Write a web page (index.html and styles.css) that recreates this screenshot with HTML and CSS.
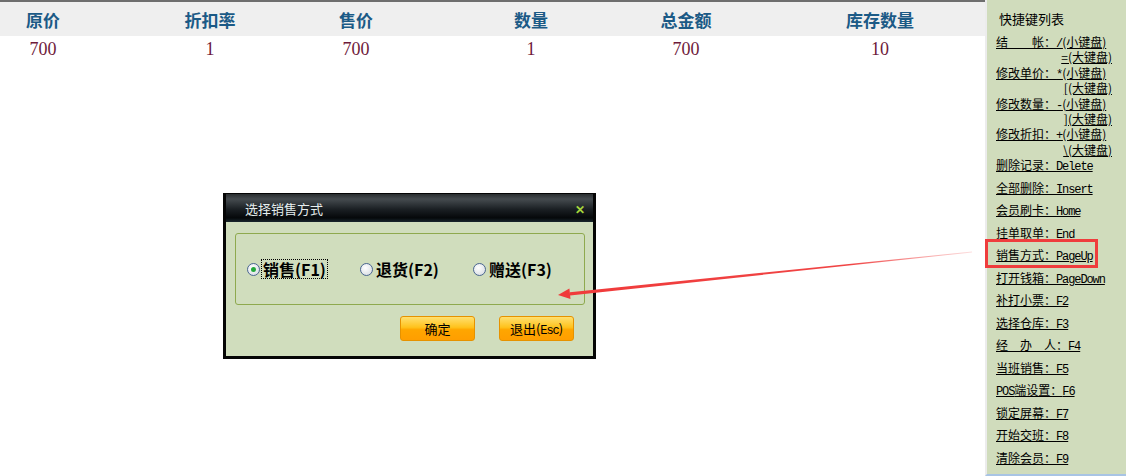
FILE: index.html
```html
<!DOCTYPE html>
<html lang="zh-CN">
<head>
  <meta charset="UTF-8">
  <title>销售方式</title>
  <link rel="stylesheet" href="styles.css">
</head>
<body>
  <div class="screen">
    <main class="sales">
      <div class="cols head">
        <span>原价</span><span>折扣率</span><span>售价</span><span>数量</span><span>总金额</span><span>库存数量</span>
      </div>
      <div class="cols row">
        <span>700</span><span>1</span><span>700</span><span>1</span><span>700</span><span>10</span>
      </div>
    </main>

    <aside class="keys">
      <div class="keys-title">快捷键列表</div>
      <ul class="keys-list">
        <li class="tight"><u>结　　帐：<span class="k">/</span>(小键盘)</u><u class="sub">=(大键盘)</u></li>
        <li class="tight"><u>修改单价：<span class="k">*</span>(小键盘)</u><u class="sub">[(大键盘)</u></li>
        <li class="tight"><u>修改数量：<span class="k">-</span>(小键盘)</u><u class="sub">](大键盘)</u></li>
        <li class="tight"><u>修改折扣：<span class="k">+</span>(小键盘)</u><u class="sub">\(大键盘)</u></li>
        <li class="tight"><u>删除记录：<span class="k">Delete</span></u></li>
        <li class="gap"><u>全部删除：<span class="k">Insert</span></u></li>
        <li><u>会员刷卡：<span class="k">Home</span></u></li>
        <li><u>挂单取单：<span class="k">End</span></u></li>
        <li><u>销售方式：<span class="k">PageUp</span></u></li>
        <li><u>打开钱箱：<span class="k">PageDown</span></u></li>
        <li><u>补打小票：<span class="k">F2</span></u></li>
        <li><u>选择仓库：<span class="k">F3</span></u></li>
        <li><u>经　办　人：<span class="k">F4</span></u></li>
        <li><u>当班销售：<span class="k">F5</span></u></li>
        <li><u><span class="k">POS</span>端设置：<span class="k">F6</span></u></li>
        <li><u>锁定屏幕：<span class="k">F7</span></u></li>
        <li><u>开始交班：<span class="k">F8</span></u></li>
        <li><u>清除会员：<span class="k">F9</span></u></li>
      </ul>
    </aside>
  </div>

  <div class="dialog">
    <div class="dialog-title">
      <span>选择销售方式</span>
      <span class="close">✕</span>
    </div>
    <div class="dialog-body">
      <div class="group">
        <label class="option"><span class="radio on"></span><span class="opt-text focus">销售(F1)</span></label>
        <label class="option"><span class="radio"></span><span class="opt-text">退货(F2)</span></label>
        <label class="option"><span class="radio"></span><span class="opt-text">赠送(F3)</span></label>
      </div>
      <div class="buttons">
        <button class="btn">确定</button>
        <button class="btn">退出(<span class="k">Esc</span>)</button>
      </div>
    </div>
  </div>

  <!-- annotation -->
  <div class="mark"></div>
  <svg class="arrow" width="1126" height="476" viewBox="0 0 1126 476">
    <defs>
      <linearGradient id="fade" x1="558" y1="0" x2="975" y2="0" gradientUnits="userSpaceOnUse">
        <stop offset="0" stop-color="#f03a3a"/>
        <stop offset="0.7" stop-color="#f04545"/>
        <stop offset="1" stop-color="#f04545" stop-opacity="0.15"/>
      </linearGradient>
    </defs>
    <polygon fill="url(#fade)" points="972,251.6 972.1,252.4 570.1,295.4 569.7,292.2"/>
    <polygon fill="#f03a3a" points="558,295 569.4,288.6 570.5,299"/>
  </svg>
</body>
</html>
```

FILE: styles.css
```css
body {
  margin: 0;
  width: 1126px;
  height: 476px;
  overflow: hidden;
  background: #fff;
  font-family: "Noto Sans CJK SC", sans-serif;
  position: relative;
}
.screen {
  display: flex;
  height: 476px;
}
.sales {
  flex: 1;
}
.cols {
  display: grid;
  grid-template-columns: 167px 146px 175px 155px 194px 1fr;
  padding-left: 3px;
  align-items: center;
}
.cols span {
  width: 80px;
  text-align: center;
}
.head {
  height: 34px;
  background: #efefef;
  border-top: 2px solid #6e6e6e;
  color: #1b5a86;
  font-size: 17px;
  font-weight: bold;
}
.row {
  height: 26px;
  color: #6e1a3a;
  font-family: "Liberation Serif", serif;
  font-size: 18px;
}

.keys {
  width: 141px;
  box-sizing: border-box;
  background: #d0dcbc;
  border-left: 2px solid #ececec;
  border-bottom: 2px solid #a8c4e4;
  padding: 11px 0 0 9px;
  font-size: 12px;
  color: #000;
}
.keys-title {
  font-size: 13px;
  line-height: 16px;
  height: 16px;
  padding-left: 3px;
}
.keys-list {
  list-style: none;
  margin: 7px 0 0;
  padding: 0;
  width: 116px;
}
.keys-list li {
  margin-top: 7.1px;
}
.keys-list li.tight {
  margin-top: 0;
}
.keys-list li.gap {
  margin-top: 7.3px;
}
.keys-list u {
  display: block;
  height: 15.4px;
  line-height: 15.4px;
  white-space: nowrap;
}
.keys-list u.sub {
  text-align: right;
}
.k {
  font-family: "Liberation Mono", monospace;
  font-size: 12px;
  line-height: 1;
  letter-spacing: -1.1px;
}

.dialog {
  position: absolute;
  left: 223px;
  top: 193px;
  width: 373px;
  height: 166px;
  box-sizing: border-box;
  border: 3px solid #050505;
  border-top-width: 1px;
  background: #d0ddbd;
}
.dialog-title {
  height: 28px;
  display: flex;
  align-items: center;
  justify-content: space-between;
  padding: 0 8px 0 19px;
  background: linear-gradient(#2a2e30, #454b4f 18%, #1a1f23 55%, #05080a 85%, #18262c);
  color: #e6eeee;
  font-size: 13px;
}
.close {
  color: #a6d63c;
  font-size: 12px;
  font-weight: bold;
}
.dialog-body {
  padding: 11px 8px 0 9px;
}
.group {
  height: 70px;
  border: 1px solid #8ea94e;
  border-radius: 3px;
  display: flex;
  align-items: center;
  padding-left: 11px;
}
.option {
  flex: 0 0 113px;
  display: flex;
  align-items: center;
  gap: 1px;
  font-size: 16px;
  font-weight: bold;
  color: #000;
}
.radio {
  width: 11px;
  height: 11px;
  border: 1px solid #4a6690;
  border-radius: 50%;
  background: radial-gradient(circle at 40% 35%, #ffffff, #dfe3e8 70%);
  display: flex;
  align-items: center;
  justify-content: center;
}
.radio.on::after {
  content: "";
  width: 5px;
  height: 5px;
  border-radius: 50%;
  background: #22a83a;
}
.opt-text {
  padding: 0 1px;
  border: 1px solid transparent;
  line-height: 18px;
}
.opt-text.focus {
  border: 1px dotted #000;
}
.buttons {
  display: flex;
  justify-content: flex-end;
  gap: 24px;
  padding: 11px 11px 0 0;
}
.btn {
  width: 75px;
  height: 25px;
  border: 1px solid #e69200;
  border-radius: 3px;
  background: linear-gradient(#ffe070, #ffc21c 45%, #ffa600 55%, #ff9e00);
  font-family: "Noto Sans CJK SC", sans-serif;
  font-size: 13px;
  color: #000;
  padding: 0;
}

.mark {
  position: absolute;
  left: 985px;
  top: 239px;
  width: 107px;
  height: 23px;
  border: 3px solid #ef3d3d;
}
.arrow {
  position: absolute;
  left: 0;
  top: 0;
  pointer-events: none;
}
```
